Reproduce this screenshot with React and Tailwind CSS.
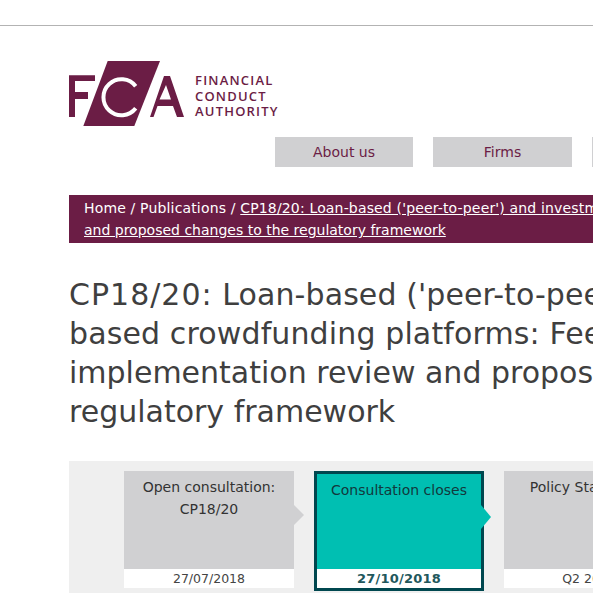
export default function App() {
  const font = "font-['DejaVu_Sans',Verdana,sans-serif]";
  return (
    <div className={`h-[593px] w-[593px] overflow-hidden bg-white ${font}`}>
      <div className="w-[1100px]">
        <div className="mt-[25px] h-px bg-[#b3b3b3] pt-0" />
        <div className="ml-[69px] mt-[35px] flex h-[66px] items-start">
          <svg width="122" height="66" viewBox="0 0 122 66" className="shrink-0">
            <path d="M0 14.3H26V20H6V31H19V38H6V56H0Z" fill="#6b1d45" />
            <path d="M38.7 0H91L65.3 65H14.3Z" fill="#6b1d45" />
            <path d="M66.7 25.3A18 18 0 1 0 66.7 47.3" fill="none" stroke="#fff" strokeWidth="4" />
            <path d="M81 56L95 15H101L115 56H108L104 45H88.5L84.5 56Z M90.5 38.5H102L97 24Z" fill="#6b1d45" fillRule="evenodd" />
          </svg>
          <div className="ml-[4px] mt-[12px] font-['Open_Sans',sans-serif] text-[13px] font-semibold leading-[15.7px] tracking-[1.2px] text-[#6b1d45]">
            <div>FINANCIAL</div>
            <div>CONDUCT</div>
            <div>AUTHORITY</div>
          </div>
        </div>
        <nav className="ml-[275px] mt-[10px] flex gap-5 text-[14px] text-[#6b1d45]">
          <a className="flex h-[30px] w-[138px] items-center justify-center bg-[#d0d0d2]">About us</a>
          <a className="flex h-[30px] w-[139px] items-center justify-center bg-[#d0d0d2]">Firms</a>
          <a className="flex h-[30px] w-[139px] items-center justify-center bg-[#d0d0d2]">Markets</a>
        </nav>
        <div className="ml-[69px] mt-[28px] w-[800px] whitespace-nowrap bg-[#6b1d45] pb-[2px] pl-[15px] pt-[2px] text-[14px] leading-[22px] text-white">
          <span className="tracking-[0.16px]"><a>Home</a> / <a>Publications</a> / <a className="underline">CP18/20: Loan-based ('peer-to-peer') and investment-based crowdfunding platforms: Feedback on our post-implementation review</a></span><br />
          <a className="underline">and proposed changes to the regulatory framework</a>
        </div>
        <h1 className="ml-[69px] mt-[32px] whitespace-nowrap text-[30px] font-normal leading-[39px] text-[#3f3f3f]">
          <span className="tracking-[0.1px]"><span className="tracking-[1px]">CP18/20:</span> Loan-based ('peer-to-peer') and investment-</span><br />
          <span className="tracking-[0.13px]">based crowdfunding platforms: Feedback on our post-</span><br />
          implementation review and proposed changes to the<br />
          regulatory framework
        </h1>
        <div className="ml-[69px] mt-[30px] flex h-[140px] gap-5 bg-[#efefef] pl-[55px] pt-[10px]">
          <div className="relative h-[117px] w-[170px] shrink-0 bg-white">
            <div className="h-[98px] bg-[#d0d0d2] pt-[5px] text-center text-[14px] leading-[22px] text-[#333]">Open consultation:<br />CP18/20</div>
            <div className="text-center text-[12.5px] leading-[20px] text-[#444]">27/07/2018</div>
            <svg width="10" height="20" className="absolute left-full top-[34px]"><path d="M0 0L10 10L0 20Z" fill="#d0d0d2" /></svg>
          </div>
          <div className="relative h-[120px] w-[170px] shrink-0 border-[3px] border-[#00474f] bg-white">
            <div className="h-[95px] bg-[#00bfb2] pt-[5px] text-center text-[14px] leading-[22px] text-[#12383c]">Consultation closes</div>
            <div className="text-center text-[13px] font-bold leading-[20px] tracking-[0.2px] text-[#21575c]">27/10/2018</div>
            <svg width="10" height="24" className="absolute left-[164px] top-[31px]"><path d="M0 0L10 12L0 24Z" fill="#00bfb2" /></svg>
          </div>
          <div className="h-[117px] w-[170px] shrink-0 bg-white">
            <div className="h-[98px] bg-[#d0d0d2] pt-[5px] text-center text-[14px] leading-[22px] text-[#333]">Policy Statement</div>
            <div className="text-center text-[12.5px] leading-[20px] text-[#444]">Q2 2019</div>
          </div>
        </div>
      </div>
    </div>
  );
}
